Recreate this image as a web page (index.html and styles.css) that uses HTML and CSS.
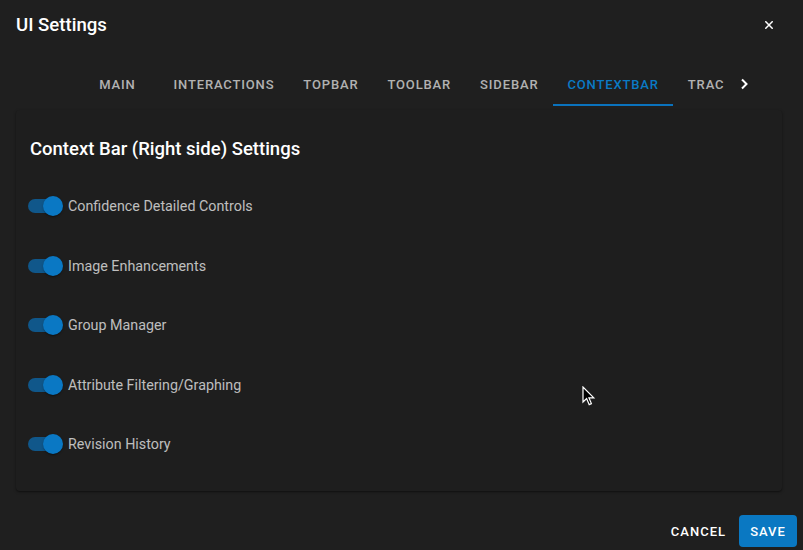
FILE: index.html
```html
<!DOCTYPE html>
<html>
<head>
<meta charset="utf-8">
<link rel="stylesheet" href="styles.css">
</head>
<body>
<div class="dialog">
  <div class="title-row">
    <h2 class="title">UI Settings</h2>
    <button class="close" aria-label="close">
      <svg width="8" height="8" viewBox="0 0 8 8"><path d="M0.8 0.8 L7.2 7.2 M7.2 0.8 L0.8 7.2" stroke="#fff" stroke-width="1.5" stroke-linecap="square"/></svg>
    </button>
  </div>
  <div class="tabs">
    <div class="scroll-btn hidden"></div>
    <div class="tab-list">
      <div class="tab tab-main">Main</div>
      <div class="tab">Interactions</div>
      <div class="tab">Topbar</div>
      <div class="tab">Toolbar</div>
      <div class="tab">Sidebar</div>
      <div class="tab active">Contextbar</div>
      <div class="tab">Tracking</div>
    </div>
    <div class="scroll-btn">
      <svg width="10" height="12" viewBox="0 0 10 12"><path d="M3 1.5 L7.5 6 L3 10.5" fill="none" stroke="#fff" stroke-width="2"/></svg>
    </div>
  </div>
  <div class="content">
    <div class="card">
      <h3 class="card-title">Context Bar (Right side) Settings</h3>
      <div class="rows">
        <label class="row"><span class="switch"><span class="track"></span><span class="thumb"></span></span><span class="label">Confidence Detailed Controls</span></label>
        <label class="row"><span class="switch"><span class="track"></span><span class="thumb"></span></span><span class="label">Image Enhancements</span></label>
        <label class="row"><span class="switch"><span class="track"></span><span class="thumb"></span></span><span class="label">Group Manager</span></label>
        <label class="row"><span class="switch"><span class="track"></span><span class="thumb"></span></span><span class="label">Attribute Filtering/Graphing</span></label>
        <label class="row"><span class="switch"><span class="track"></span><span class="thumb"></span></span><span class="label">Revision History</span></label>
      </div>
    </div>
  </div>
  <div class="actions">
    <button class="btn btn-text">Cancel</button>
    <button class="btn btn-primary">Save</button>
  </div>
  <svg class="cursor" width="14" height="21" viewBox="0 0 14 21"><path d="M1 1 L1 16 L4.6 12.6 L7.2 18.6 L9.4 17.6 L6.9 11.8 L11.8 11.8 Z" fill="#000" stroke="#fff" stroke-width="1.2" stroke-linejoin="miter"/></svg>
</div>
</body>
</html>
```
FILE: styles.css
```css
* { box-sizing: border-box; }
html, body {
  margin: 0;
  padding: 0;
  background: #1f1f1f;
}
body {
  font-family: Roboto, "Liberation Sans", sans-serif;
  color: #fff;
}
.dialog {
  position: relative;
  width: 803px;
  height: 550px;
  display: flex;
  flex-direction: column;
  background: #1f1f1f;
  overflow: hidden;
}
.title-row {
  height: 48px;
  display: flex;
  align-items: center;
  justify-content: space-between;
  padding: 1px 24px 0 16px;
}
.title {
  margin: 0;
  font-size: 18.6px;
  font-weight: 500;
  letter-spacing: 0;
  color: #fff;
  padding-top: 1px;
}
.close {
  background: none;
  border: 0;
  padding: 0;
  width: 20px;
  height: 20px;
  display: flex;
  align-items: center;
  justify-content: center;
  margin-right: 0;
}
.tabs {
  margin-top: 10px;
  height: 48px;
  display: flex;
  padding: 0 39px 0 36px;
}
.scroll-btn {
  width: 40px;
  flex: none;
  display: flex;
  align-items: center;
  justify-content: center;
  padding-top: 4px;
}
.scroll-btn.hidden { visibility: hidden; }
.tab-list {
  flex: 1;
  display: flex;
  overflow: hidden;
  white-space: nowrap;
}
.tab {
  flex: none;
  position: relative;
  display: flex;
  align-items: center;
  justify-content: center;
  padding: 4px 14.5px 0;
  font-size: 13px;
  font-weight: 500;
  letter-spacing: 0.85px;
  text-transform: uppercase;
  color: rgba(255, 255, 255, 0.66);
}
.tab-main { min-width: 83px; }
.tab.active { color: #0a7ac4; }
.tab.active::after {
  content: "";
  position: absolute;
  left: 0;
  right: 0;
  bottom: 0;
  height: 2px;
  background: #0a72bd;
}
.content {
  padding: 4px 21px 0 16px;
}
.card {
  height: 381px;
  background: #1e1e1e;
  border-radius: 4px;
  box-shadow: 0 1px 3px rgba(0,0,0,0.35), 0 1px 1px rgba(0,0,0,0.2);
  padding: 27px 14px 0 12px;
}
.card-title {
  margin: 0 0 0 2px;
  font-size: 18.5px;
  font-weight: 500;
  line-height: 24px;
  color: #fff;
}
.rows {
  margin-top: 26px;
  display: flex;
  flex-direction: column;
  gap: 21.5px;
}
.row {
  height: 38px;
  display: flex;
  align-items: center;
}
.switch {
  position: relative;
  width: 40px;
  height: 38px;
  flex: none;
}
.track {
  position: absolute;
  left: 0;
  top: 12px;
  width: 30px;
  height: 14px;
  border-radius: 7px;
  background: #10578a;
}
.thumb {
  position: absolute;
  left: 15px;
  top: 9px;
  width: 20px;
  height: 20px;
  border-radius: 50%;
  background: #0a78c4;
  box-shadow: 0 2px 1px -1px rgba(0,0,0,0.2), 0 1px 1px rgba(0,0,0,0.14), 0 1px 3px rgba(0,0,0,0.12);
}
.label {
  font-size: 14.3px;
  color: rgba(255, 255, 255, 0.72);
}
.actions {
  margin-top: auto;
  height: 50px;
  display: flex;
  justify-content: flex-end;
  align-items: flex-end;
  gap: 8px;
  padding: 0 6px 3px 0;
}
.btn {
  font-family: Roboto, "Liberation Sans", sans-serif;
  font-size: 13px;
  font-weight: 500;
  letter-spacing: 1px;
  text-transform: uppercase;
  border: 0;
  border-radius: 4px;
  height: 32px;
  padding: 0 12px;
  cursor: pointer;
}
.btn-text {
  background: transparent;
  color: #fff;
  padding: 0 5px;
}
.btn-primary {
  background: #0a78c2;
  color: #fff;
  width: 58px;
  padding: 0;
}
.cursor {
  position: absolute;
  left: 582px;
  top: 386px;
}
```
